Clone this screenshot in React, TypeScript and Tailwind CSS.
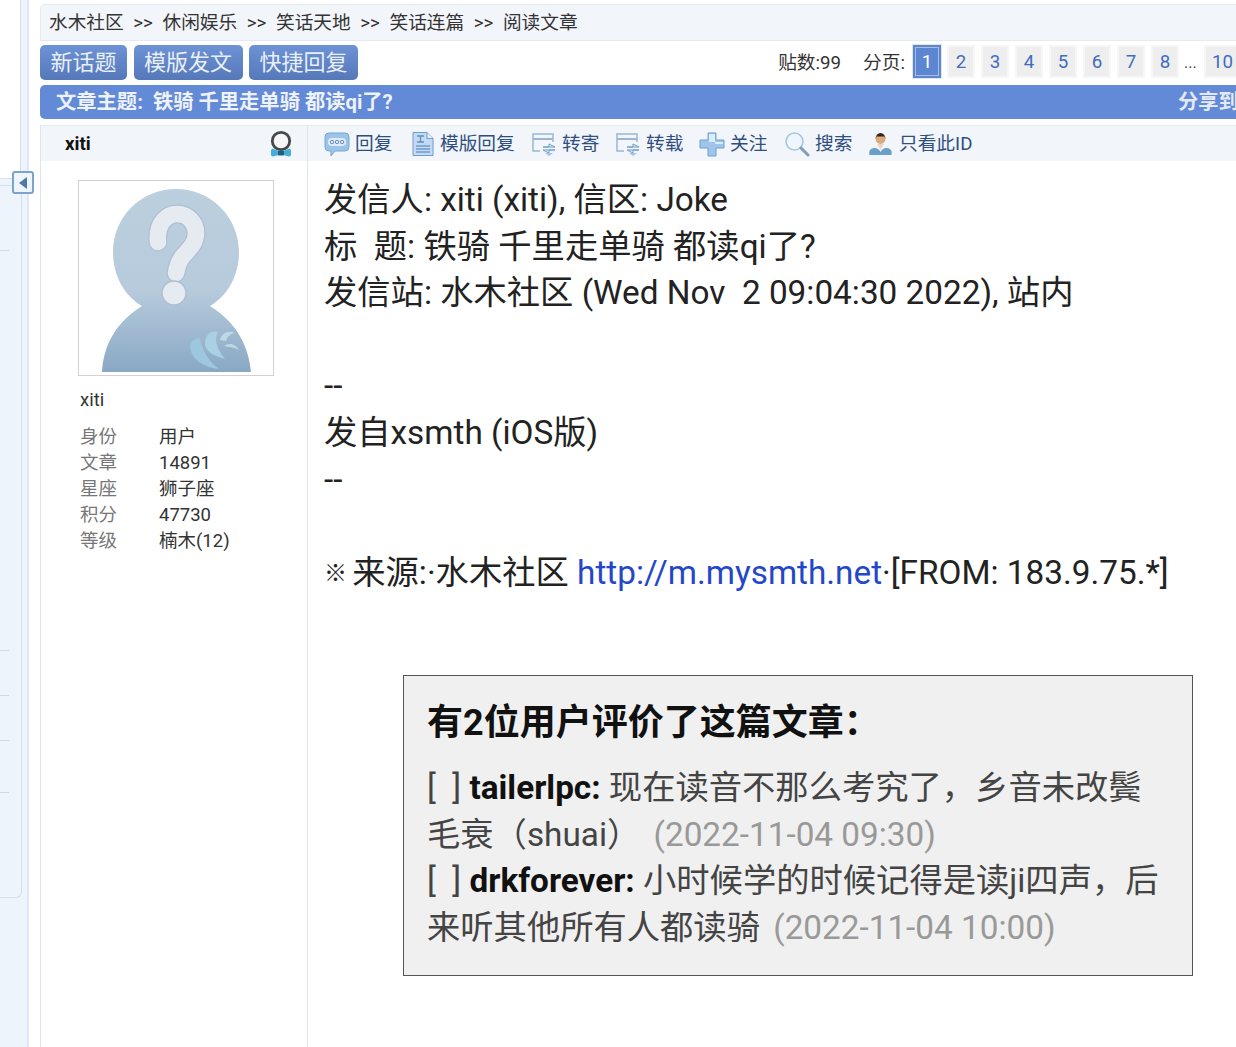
const pages = ["2", "3", "4", "5", "6", "7", "8"];

function ReplyIcon() {
  return (
    <svg width="26" height="26" viewBox="0 0 26 26">
      <path d="M5 2h16a4 4 0 0 1 4 4v10a4 4 0 0 1-4 4H11l-4 5v-5H5a4 4 0 0 1-4-4V6a4 4 0 0 1 4-4z" fill="#9cc4e8" stroke="#79a7d4" />
      <rect x="4" y="7" width="18" height="8" rx="4" fill="#dfeafa" />
      <circle cx="8" cy="11" r="1.700" fill="none" stroke="#6b8fba" />
      <circle cx="13" cy="11" r="1.700" fill="none" stroke="#6b8fba" />
      <circle cx="18" cy="11" r="1.700" fill="none" stroke="#6b8fba" />
    </svg>
  );
}

function TemplateIcon() {
  return (
    <svg width="24" height="26" viewBox="0 0 24 26">
      <path d="M2 1.500h14l6 6v17H2z" fill="#c4daf0" stroke="#6f9ccb" />
      <path d="M6 5h7M9.500 5v6M6 11h7" stroke="#5e8fc2" strokeWidth="1.300" fill="none" />
      <path d="M5 15h14M5 18h14M5 21h14" stroke="#6f9ccb" strokeWidth="1.500" fill="none" />
      <path d="M16 1.500v6h6" fill="#e6f0fa" stroke="#6f9ccb" />
    </svg>
  );
}

function ForwardIcon() {
  return (
    <svg width="26" height="26" viewBox="0 0 26 26">
      <path d="M9 20H2V3h20v8" fill="none" stroke="#9ab6d3" strokeWidth="1.500" />
      <path d="M2 8h20" stroke="#9ab6d3" strokeWidth="2" />
      <path d="M12 16h6v-3l6 3z" fill="#eef4fb" stroke="#6f9ccb" />
      <path d="M24 19h-6v3l-6-3z" fill="#eef4fb" stroke="#6f9ccb" />
      <path d="M14 22h8l-4 3z" fill="#a5c4e3" />
    </svg>
  );
}

function PlusIcon() {
  return (
    <svg width="26" height="26" viewBox="0 0 26 26">
      <path d="M9 2h8v7h8v8h-8v8H9v-8H1V9h8z" fill="#9fc6ea" stroke="#6f9fd0" />
      <path d="M10 3h6v8h8v2h-8v-2h-6z" fill="#dcebf9" />
    </svg>
  );
}

function SearchIcon() {
  return (
    <svg width="26" height="26" viewBox="0 0 26 26">
      <circle cx="10.500" cy="10.500" r="8.500" fill="#eef6fb" stroke="#a6c6da" strokeWidth="1.600" />
      <path d="M17 17l7 7" stroke="#7f9fb8" strokeWidth="3" strokeLinecap="round" />
    </svg>
  );
}

function PersonIcon() {
  return (
    <svg width="27" height="26" viewBox="-1.500 0 27 26">
      <circle cx="12" cy="8" r="5" fill="#d8ab7c" />
      <path d="M7 8a5 6 0 0 1 10 0l-1-2.500H8z" fill="#33261c" />
      <path d="M8.500 13h7l-3.500 6z" fill="#e9d6c2" />
      <path d="M1 24c-1-4 1-7 5-7 3 0 5 2 6 4 1-2 3-4 6-4 4 0 6 3 5 7z" fill="#6b9fcb" />
    </svg>
  );
}

function MedalIcon() {
  return (
    <svg width="22" height="28" viewBox="0 0 22 28">
      <circle cx="11" cy="11" r="8.700" fill="#f4f6f8" stroke="#45494d" strokeWidth="2.800" />
      <path d="M2 18.500l7 2.500v4l-6 1.500a2 2 0 0 1-2-2v-4z" fill="#46aed6" />
      <path d="M20 18.500l-7 2.500v4l6 1.500a2 2 0 0 0 2-2v-4z" fill="#46aed6" />
      <rect x="8" y="20.500" width="6" height="5" rx="1" fill="#1e5f7e" />
    </svg>
  );
}

function Avatar() {
  return (
    <svg width="196" height="196" viewBox="0 0 196 196" className="block">
      <defs>
        <linearGradient id="figure" x1="0" y1="0" x2="0" y2="1">
          <stop offset="0" stopColor="#bccfdf" />
          <stop offset="0.55" stopColor="#b7cbdc" />
          <stop offset="1" stopColor="#89a8c4" />
        </linearGradient>
      </defs>
      <rect x="0.500" y="0.500" width="195" height="195" fill="#ffffff" stroke="#d2d2d2" />
      <path
        d="M24 192C26 160 42 140 64 126C45 115 35 94 35 72C35 37 63 9 98 9C133 9 161 37 161 72C161 94 151 115 132 126C154 140 170 160 173 192Z"
        fill="url(#figure)"
      />
      {/* question mark */}
      <path d="M80 62C78 42 90 34 99 34C111 34 118 44 118 53C118 64 110 70 105 76C101 81 99 87 98 93" fill="none" stroke="#aebfd0" strokeWidth="19" strokeLinecap="round" />
      <path d="M80 62C78 42 90 34 99 34C111 34 118 44 118 53C118 64 110 70 105 76C101 81 99 87 98 93" fill="none" stroke="#e6ebf1" strokeWidth="16.500" strokeLinecap="round" />
      <circle cx="96" cy="113" r="12" fill="#e6ebf1" stroke="#aebfd0" strokeWidth="1.500" />
      {/* splash mark */}
      <path d="M112 165C112 178 124 187 141 189C130 181 124 170 122 158C118 158 113 160 112 165Z" fill="#9cc7df" />
      <path d="M127 162C128 154 134 150 140 152C136 158 138 168 147 179C136 176 126 171 127 162Z" fill="#a9d0e3" />
      <path d="M142 160C144 153 150 150 157 153C152 154 149 157 148 161Z" fill="#bcd9e6" />
      <path d="M146 166C151 162 158 164 161 170C156 167 151 167 146 166Z" fill="#bcd9e6" />
    </svg>
  );
}

function ActionItem({ icon, label, width }: { icon: React.ReactNode; label: string; width: string }) {
  return (
    <div className={`flex items-center gap-[5px] ${width}`}>
      {icon}
      <span className="pt-px text-[18.700px] leading-none text-[#2f4f80]">{label}</span>
    </div>
  );
}

function UserStat({ label, value }: { label: string; value: string }) {
  return (
    <div className="flex h-[26px] items-center">
      <span className="w-[79px] text-[#777]">{label}</span>
      <span className="text-[#333]">{value}</span>
    </div>
  );
}

export default function App() {
  return (
    <div className="flex h-[1047px] w-[1236px] overflow-hidden bg-white font-['Roboto','Noto_Sans_CJK_SC',sans-serif]">
      {/* collapsed side panel */}
      <div className="relative h-full w-[29px] shrink-0 border-r-2 border-[#dfe8f5] bg-[#edf4fc]">
        <div className="h-[178px] w-[21px] border-r border-[#d4deec] bg-white" />
        <div className="h-[8px] w-[21px] border-y border-[#d7e1ee]" />
        <div className="h-[712px] w-[22px] rounded-br-[6px] border-r border-b border-[#d4deec]" />
        {[250, 650, 695, 740, 792].map((y) => (
          <div key={y} className="absolute left-0 h-px w-[9px] bg-[#d5d8dd]" style={{ top: y }} />
        ))}
        <div className="absolute left-[12px] top-[171px] flex h-[23px] w-[22px] items-center justify-center rounded-[3px] border-2 border-[#7da3cb] bg-[#eef5fc]">
          <div className="h-0 w-0 border-y-[6px] border-r-[8px] border-y-transparent border-r-[#4d78a8]" />
        </div>
      </div>

      <div className="ml-[11px] flex min-w-0 flex-1 flex-col pt-[4px]">
        {/* breadcrumb */}
        <div className="flex h-[37px] shrink-0 items-center gap-[9.600px] rounded-tl-[5px] border border-r-0 border-[#e3eaf2] bg-[#f2f5fa] pl-[8px] pt-px text-[18.700px] text-[#333]">
          <span>水木社区</span>
          <span>&gt;&gt;</span>
          <span>休闲娱乐</span>
          <span>&gt;&gt;</span>
          <span>笑话天地</span>
          <span>&gt;&gt;</span>
          <span>笑话连篇</span>
          <span>&gt;&gt;</span>
          <span>阅读文章</span>
        </div>

        {/* toolbar */}
        <div className="flex h-[43px] shrink-0 items-start pt-[4px]">
          <div className="flex gap-[6.500px]">
            {["新话题", "模版发文", "快捷回复"].map((label) => (
              <div
                key={label}
                className="flex h-[35px] items-center rounded-[5px] bg-gradient-to-b from-[#6d93d6] to-[#5578b8] px-[10.500px] text-[22px] text-[#e9eff9]"
              >
                {label}
              </div>
            ))}
          </div>
          <div className="ml-auto flex items-center text-[18.700px] text-[#333]">
            <span className="pt-[3px]">贴数:99</span>
            <span className="ml-[22px] pt-[3px]">分页:</span>
            <div className="ml-[8px] flex h-[33px] w-[28px] items-center justify-center border-2 border-[#5f86c6] bg-[#5d86d2] pt-px text-white shadow-[inset_0_0_0_1px_#a5bde5] outline outline-1 outline-[#dbe6f5]">
              1
            </div>
            {pages.map((p) => (
              <div
                key={p}
                className="ml-[6px] flex h-[33px] w-[28px] items-center justify-center border-2 border-[#f6f6f6] bg-[#eeeeee] pt-px text-[#3f6cc0]"
              >
                {p}
              </div>
            ))}
            <span className="mx-[5px] w-[15px] pt-[3px] text-[16px] text-[#444]">...</span>
            <div className="flex h-[33px] w-[32px] items-center border-2 border-r-0 border-[#f6f6f6] bg-[#eeeeee] pl-[6px] pt-px text-[#3f6cc0]">
              10
            </div>
          </div>
        </div>

        {/* title bar */}
        <div className="mt-[1px] flex h-[34px] shrink-0 items-center justify-between rounded-l-[5px] bg-[#638ad6] pl-[16px] text-[20.300px] font-bold text-[#eef2fb]">
          <span>文章主题:&nbsp; 铁骑 千里走单骑 都读qi了?</span>
          <span className="w-[58px] overflow-hidden whitespace-nowrap text-[#e3e9f6]">分享到</span>
        </div>

        {/* article */}
        <div className="mt-[6px] flex min-h-0 flex-1">
          <div className="w-[268px] shrink-0 border-x border-[#dde4ee]">
            <div className="flex h-[36px] items-center justify-between border-t border-[#e3eaf2] bg-[#f2f5fa] pl-[24px] pr-[15px]">
              <span className="pt-[2px] text-[18.700px] font-bold text-[#111]">xiti</span>
              <MedalIcon />
            </div>
            <div className="pl-[37px] pt-[19px]">
              <Avatar />
              <div className="pl-[2px] pt-[13px] text-[18.500px] text-[#333]">
                <div className="mb-[14px] h-[22px] leading-[22px]">xiti</div>
                <UserStat label="身份" value="用户" />
                <UserStat label="文章" value="14891" />
                <UserStat label="星座" value="狮子座" />
                <UserStat label="积分" value="47730" />
                <UserStat label="等级" value="楠木(12)" />
              </div>
            </div>
          </div>

          <div className="min-w-0 flex-1">
            <div className="flex h-[36px] items-center border-t border-[#e3eaf2] bg-[#f2f5fa] pl-[16px]">
              <ActionItem icon={<ReplyIcon />} label="回复" width="w-[87px]" />
              <ActionItem icon={<TemplateIcon />} label="模版回复" width="w-[120px]" />
              <ActionItem icon={<ForwardIcon />} label="转寄" width="w-[84px]" />
              <ActionItem icon={<ForwardIcon />} label="转载" width="w-[84px]" />
              <ActionItem icon={<PlusIcon />} label="关注" width="w-[85px]" />
              <ActionItem icon={<SearchIcon />} label="搜索" width="w-[83px]" />
              <ActionItem icon={<PersonIcon />} label="只看此ID" width="w-[120px]" />
            </div>

            <div className="pl-[16px] pt-[16px] text-[33.300px] leading-[46.600px] text-[#222]">
              <div>发信人: xiti (xiti), 信区: Joke</div>
              <div className="whitespace-pre">标  题: 铁骑 千里走单骑 都读qi了?</div>
              <div className="whitespace-pre">发信站: 水木社区 (Wed Nov  2 09:04:30 2022), 站内</div>
              <div className="h-[46.600px]" />
              <div>--</div>
              <div>发自xsmth (iOS版)</div>
              <div>--</div>
              <div className="h-[46.600px]" />
              <div className="whitespace-nowrap">
                <span className="mr-[-3px] align-[3px] text-[23px] leading-none">※</span> 来源:·水木社区 <span className="text-[#2447c9]">http://m.mysmth.net</span>·[FROM: 183.9.75.*]
              </div>
            </div>

            {/* ratings box */}
            <div className="ml-[95px] mt-[79px] h-[301px] w-[790px] border border-[#555] bg-[#f0f0f0] px-[23px] pt-[24px] text-[33.300px] leading-[46.700px] text-[#444]">
              <div className="mb-[18px] text-[36px] font-bold text-[#111]">有2位用户评价了这篇文章：</div>
              <div>
                <span className="whitespace-pre">[  ] </span><b className="text-[#111]">tailerlpc:</b> 现在读音不那么考究了，乡音未改鬓毛衰（shuai） <span className="ml-[5px] text-[#999]">(2022-11-04 09:30)</span>
              </div>
              <div>
                <span className="whitespace-pre">[  ] </span><b className="text-[#111]">drkforever:</b> 小时候学的时候记得是读ji四声，后来听其他所有人都读骑 <span className="ml-[5px] text-[#999]">(2022-11-04 10:00)</span>
              </div>
            </div>
          </div>
        </div>
      </div>
    </div>
  );
}
